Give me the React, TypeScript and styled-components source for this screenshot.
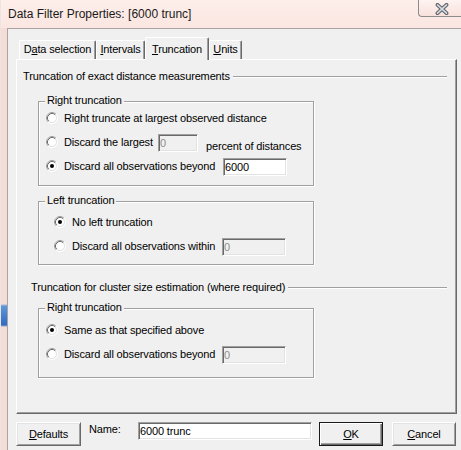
import React from "react";
import styled, { createGlobalStyle } from "styled-components";

const GlobalStyle = createGlobalStyle`
  html, body { margin: 0; padding: 0; background: #fbe8e4; }
  body { font-family: "Liberation Sans", Arial, sans-serif; }
  * { box-sizing: border-box; }
`;

const Window = styled.div`
  width: 461px;
  height: 450px;
  overflow: hidden;
  display: flex;
  flex-direction: column;
  border-left: 1px solid #ebe4e3;
  background: #fbe8e4;
`;

const TitleBar = styled.div`
  height: 28px;
  flex: none;
  display: flex;
  justify-content: space-between;
  align-items: flex-start;
  padding-left: 7px;
  background: linear-gradient(#fdeeea, #fbe6e1);
`;

const Title = styled.div`
  margin-top: 7px;
  font-size: 12px;
  line-height: 14px;
  color: #1a1a1a;
  white-space: nowrap;
`;

const CloseButton = styled.div`
  width: 43px;
  height: 18px;
  margin-top: -1px;
  border: 1px solid #8c8c8c;
  border-right: none;
  border-bottom-left-radius: 4px;
  background: linear-gradient(#fdf3f1, #f8e1dc);
  display: flex;
  align-items: center;
  padding-left: 16px;
  padding-top: 1px;
`;

const Body = styled.div`
  flex: 1;
  display: flex;
  min-height: 0;
`;

const LeftFrame = styled.div`
  width: 6px;
  flex: none;
  background: linear-gradient(
    to bottom,
    #f6dcd6 0px,
    #f6dcd6 276px,
    #5d97dc 278px,
    #2f6cc2 297px,
    #f6dcd6 299px,
    #f6dcd6 100%
  );
`;

const Client = styled.div`
  flex: 1;
  display: flex;
  flex-direction: column;
  border-top: 1px solid #a9a3a2;
  border-left: 1px solid #a9a3a2;
  background: #f0f0f0;
  padding: 8px 0 0 8px;
  font-size: 11px;
  line-height: 13px;
  letter-spacing: -0.15px;
  color: #000;
`;

const TabStrip = styled.div`
  height: 22px;
  display: flex;
  align-items: flex-end;
  padding-left: 3px;
  position: relative;
  z-index: 1;
`;

const Tab = styled.div<{ $w: number; $active?: boolean }>`
  width: ${(p) => p.$w}px;
  height: ${(p) => (p.$active ? 23 : 19)}px;
  margin-bottom: ${(p) => (p.$active ? -1 : 0)}px;
  padding-top: ${(p) => (p.$active ? 5 : 2)}px;
  background: #f0f0f0;
  border-top: 1px solid #fff;
  border-left: 1px solid #fff;
  border-right: 1px solid #696969;
  box-shadow: inset -1px 0 0 #a0a0a0;
  border-radius: 2px 2px 0 0;
  text-align: center;
  white-space: nowrap;
`;

const Key = styled.span`
  text-decoration: underline;
  text-underline-offset: 1px;
`;

const Panel = styled.div`
  width: 441px;
  height: 355px;
  flex: none;
  display: flex;
  flex-direction: column;
  align-items: flex-start;
  border-top: 1px solid #fff;
  border-left: 1px solid #fff;
  border-right: 1px solid #696969;
  border-bottom: 1px solid #696969;
  box-shadow: inset -1px -1px 0 #a0a0a0;
  padding: 10px 9px 0 6px;
`;

const SectionHeader = styled.div<{ $indent: number; $top: number }>`
  align-self: stretch;
  display: flex;
  align-items: center;
  height: 13px;
  margin-left: ${(p) => p.$indent}px;
  margin-top: ${(p) => p.$top}px;
  white-space: nowrap;
`;

const Rule = styled.div`
  flex: 1;
  height: 2px;
  margin-left: 3px;
  border-top: 1px solid #a0a0a0;
  border-bottom: 1px solid #fff;
`;

const Group = styled.div<{ $top: number; $pt: number; $pb: number; $pl: number }>`
  position: relative;
  width: 276px;
  margin-left: 15px;
  margin-top: ${(p) => p.$top}px;
  padding: ${(p) => p.$pt}px 0 ${(p) => p.$pb}px ${(p) => p.$pl}px;
  border: 1px solid #a0a0a0;
  box-shadow: 1px 1px 0 #fff, inset 1px 1px 0 #fff;
`;

const Legend = styled.span`
  position: absolute;
  top: -8px;
  left: 6px;
  padding: 0 2px;
  background: #f0f0f0;
  white-space: nowrap;
`;

const OptionRow = styled.div`
  height: 24px;
  display: flex;
  align-items: center;
`;

const RadioSvg = styled.svg`
  flex: none;
  display: block;
`;

const OptionLabel = styled.span<{ $w?: number }>`
  margin-left: 6px;
  white-space: nowrap;
  ${(p) => (p.$w ? `width: ${p.$w}px; flex: none;` : "")}
`;

const Field = styled.input<{ $w: number; $mt?: number }>`
  width: ${(p) => p.$w}px;
  height: 18px;
  flex: none;
  margin: ${(p) => p.$mt ?? 2}px 0 0 0;
  padding: 0 0 0 1px;
  font: inherit;
  font-size: 11px;
  letter-spacing: -0.15px;
  color: #000;
  background: #fff;
  border: 1px solid;
  border-color: #a0a0a0 #fff #fff #a0a0a0;
  box-shadow: inset 1px 1px 0 #696969, inset -1px -1px 0 #e3e3e3;
  outline: none;
  &:disabled {
    background: #f0f0f0;
    color: #8d8d8d;
  }
`;

const Suffix = styled.span`
  margin: 8px 0 0 8px;
  white-space: nowrap;
`;

const ButtonRow = styled.div`
  display: flex;
  align-items: flex-start;
  margin-top: 8px;
`;

const Button = styled.div<{ $w: number; $default?: boolean; $gap?: number }>`
  width: ${(p) => p.$w}px;
  height: 24px;
  flex: none;
  margin-left: ${(p) => p.$gap ?? 0}px;
  display: flex;
  align-items: center;
  justify-content: center;
  background: #f0f0f0;
  border: 1px solid;
  border-color: ${(p) => (p.$default ? "#1a1a1a" : "#fff #696969 #696969 #fff")};
  box-shadow: ${(p) =>
    p.$default
      ? "inset 1px 1px 0 #fff, inset -1px -1px 0 #696969, inset -2px -2px 0 #a0a0a0"
      : "inset 1px 1px 0 #e3e3e3, inset -1px -1px 0 #a0a0a0"};
  white-space: nowrap;
`;

const NameLabel = styled.span`
  width: 49px;
  flex: none;
  margin: 1px 0 0 8px;
`;

const Radio = ({ checked }: { checked?: boolean }) => (
  <RadioSvg width={12} height={12} viewBox="0 0 12 12">
    <circle cx={6} cy={6} r={4.2} fill="#fff" />
    <path d="M2.11 9.89A5.5 5.5 0 0 1 9.89 2.11" stroke="#a0a0a0" fill="none" />
    <path d="M9.89 2.11A5.5 5.5 0 0 1 2.11 9.89" stroke="#fff" fill="none" />
    <path d="M2.82 9.18A4.5 4.5 0 0 1 9.18 2.82" stroke="#696969" fill="none" />
    <path d="M9.18 2.82A4.5 4.5 0 0 1 2.82 9.18" stroke="#e3e3e3" fill="none" />
    {checked && <circle cx={6} cy={6} r={2} fill="#000" />}
  </RadioSvg>
);

const CloseGlyph = () => (
  <svg width={14} height={12} viewBox="0 0 14 12">
    <path d="M2.5 1.8L11.5 10.2M11.5 1.8L2.5 10.2" stroke="#5b6068" strokeWidth={3.8} strokeLinecap="round" />
    <path d="M2.5 1.8L11.5 10.2M11.5 1.8L2.5 10.2" stroke="#d6d9de" strokeWidth={1.7} strokeLinecap="round" />
  </svg>
);

export default function App() {
  return (
    <>
      <GlobalStyle />
      <Window>
        <TitleBar>
          <Title>Data Filter Properties: [6000 trunc]</Title>
          <CloseButton>
            <CloseGlyph />
          </CloseButton>
        </TitleBar>
        <Body>
          <LeftFrame />
          <Client>
            <TabStrip>
              <Tab $w={77}>
                D<Key>a</Key>ta selection
              </Tab>
              <Tab $w={49}>
                <Key>I</Key>ntervals
              </Tab>
              <Tab $w={64} $active>
                <Key>T</Key>runcation
              </Tab>
              <Tab $w={33}>
                <Key>U</Key>nits
              </Tab>
            </TabStrip>
            <Panel>
              <SectionHeader $indent={0} $top={0}>
                Truncation of exact distance measurements
                <Rule />
              </SectionHeader>

              <Group $top={18} $pt={4} $pb={7} $pl={7}>
                <Legend>Right truncation</Legend>
                <OptionRow>
                  <Radio />
                  <OptionLabel>Right truncate at largest observed distance</OptionLabel>
                </OptionRow>
                <OptionRow>
                  <Radio />
                  <OptionLabel $w={94}>Discard the largest</OptionLabel>
                  <Field $w={40} value="0" disabled readOnly />
                  <Suffix>percent of distances</Suffix>
                </OptionRow>
                <OptionRow>
                  <Radio checked />
                  <OptionLabel $w={159}>Discard all observations beyond</OptionLabel>
                  <Field $w={64} value="6000" readOnly />
                </OptionRow>
              </Group>

              <Group $top={15} $pt={8} $pb={6} $pl={15}>
                <Legend>Left truncation</Legend>
                <OptionRow>
                  <Radio checked />
                  <OptionLabel>No left truncation</OptionLabel>
                </OptionRow>
                <OptionRow>
                  <Radio />
                  <OptionLabel $w={150}>Discard all observations within</OptionLabel>
                  <Field $w={64} value="0" disabled readOnly />
                </OptionRow>
              </Group>

              <SectionHeader $indent={8} $top={16}>
                Truncation for cluster size estimation (where required)
                <Rule />
              </SectionHeader>

              <Group $top={14} $pt={9} $pb={11} $pl={7}>
                <Legend>Right truncation</Legend>
                <OptionRow>
                  <Radio checked />
                  <OptionLabel>Same as that specified above</OptionLabel>
                </OptionRow>
                <OptionRow>
                  <Radio />
                  <OptionLabel $w={158}>Discard all observations beyond</OptionLabel>
                  <Field $w={64} value="0" disabled readOnly />
                </OptionRow>
              </Group>
            </Panel>

            <ButtonRow>
              <Button $w={65}>
                <Key>D</Key>efaults
              </Button>
              <NameLabel>Name:</NameLabel>
              <Field $w={174} $mt={0} value="6000 trunc" readOnly />
              <Button $w={64} $default $gap={7}>
                <Key>O</Key>K
              </Button>
              <Button $w={64} $gap={9}>
                <Key>C</Key>ancel
              </Button>
            </ButtonRow>
          </Client>
        </Body>
      </Window>
    </>
  );
}
